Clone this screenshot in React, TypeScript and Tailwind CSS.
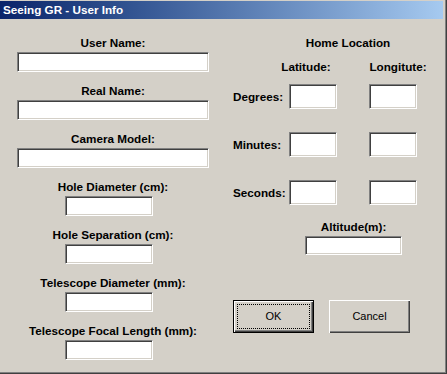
import React from "react";

const sunken =
  "bg-white border border-t-[#808080] border-l-[#808080] border-r-white border-b-white shadow-[inset_1px_1px_0_#404040,inset_-1px_-1px_0_#d4d0c8]";

const Field = ({ label, wide }: { label: string; wide?: boolean }) => (
  <div className="flex flex-col items-center gap-[2px]">
    <div className="h-[14px] leading-[14px] font-bold whitespace-nowrap">{label}</div>
    <div className={`${sunken} h-[20px] ${wide ? "w-[192px]" : "w-[88px] mr-[8px]"}`} />
  </div>
);

const CoordRow = ({ label }: { label: string }) => (
  <div className="flex items-center ml-[7px]">
    <div className="w-[56px] font-bold leading-[14px]">{label}</div>
    <div className={`${sunken} w-[48px] h-[25px]`} />
    <div className={`${sunken} w-[48px] h-[25px] ml-[32px]`} />
  </div>
);

export default function App() {
  return (
    <div
      className="w-[447px] h-[374px] bg-[#d4d0c8] text-black text-[11.7px] border-r border-b border-[#404040] shadow-[inset_-1px_-1px_0_#808080] flex flex-col overflow-hidden"
      style={{ fontFamily: '"Liberation Sans", Arial, sans-serif' }}
    >
      {/* Title bar */}
      <div className="mt-[1px] mr-[3px] h-[18px] bg-gradient-to-r from-[#0a246a] to-[#a6caf0] flex items-center pl-[3px]">
        <span className="text-white font-bold">Seeing GR - User Info</span>
      </div>

      <div className="flex">
        {/* Left column */}
        <div className="w-[226px] flex flex-col gap-[12px] pt-[17px]">
          <Field label="User Name:" wide />
          <Field label="Real Name:" wide />
          <Field label="Camera Model:" wide />
          <Field label="Hole Diameter (cm):" />
          <Field label="Hole Separation (cm):" />
          <Field label="Telescope Diameter (mm):" />
          <Field label="Telescope Focal Length (mm):" />
        </div>

        {/* Right column */}
        <div className="flex flex-col pt-[17px]">
          <div className="ml-[40px] w-[164px] text-center font-bold h-[14px] leading-[14px]">
            Home Location
          </div>
          <div className="flex ml-[40px] gap-[12px] mt-[10px] font-bold h-[14px] leading-[14px]">
            <div className="w-[80px] text-center">Latitude:</div>
            <div className="w-[80px] text-center">Longitute:</div>
          </div>
          <div className="flex flex-col gap-[23px] mt-[10px]">
            <CoordRow label="Degrees:" />
            <CoordRow label="Minutes:" />
            <CoordRow label="Seconds:" />
          </div>
          <div className="ml-[79px] w-[97px] flex flex-col items-center gap-[2px] mt-[15px]">
            <div className="font-bold h-[14px] leading-[14px]">Altitude(m):</div>
            <div className={`${sunken} w-[97px] h-[19px]`} />
          </div>
          <div className="flex ml-[7px] gap-[15px] mt-[45px] text-[11px]">
            <button className="w-[81px] h-[33px] border border-black bg-[#d4d0c8] p-0 flex">
              <div className="flex-1 flex p-[3px] shadow-[inset_1px_1px_0_#fff,inset_-1px_-1px_0_#404040,inset_-2px_-2px_0_#808080]">
                <div className="flex-1 border border-dotted border-black flex items-center justify-center">
                  OK
                </div>
              </div>
            </button>
            <button className="w-[81px] h-[33px] bg-[#d4d0c8] flex items-center justify-center shadow-[inset_1px_1px_0_#fff,inset_-1px_-1px_0_#404040,inset_-2px_-2px_0_#808080]">
              Cancel
            </button>
          </div>
        </div>
      </div>
    </div>
  );
}
